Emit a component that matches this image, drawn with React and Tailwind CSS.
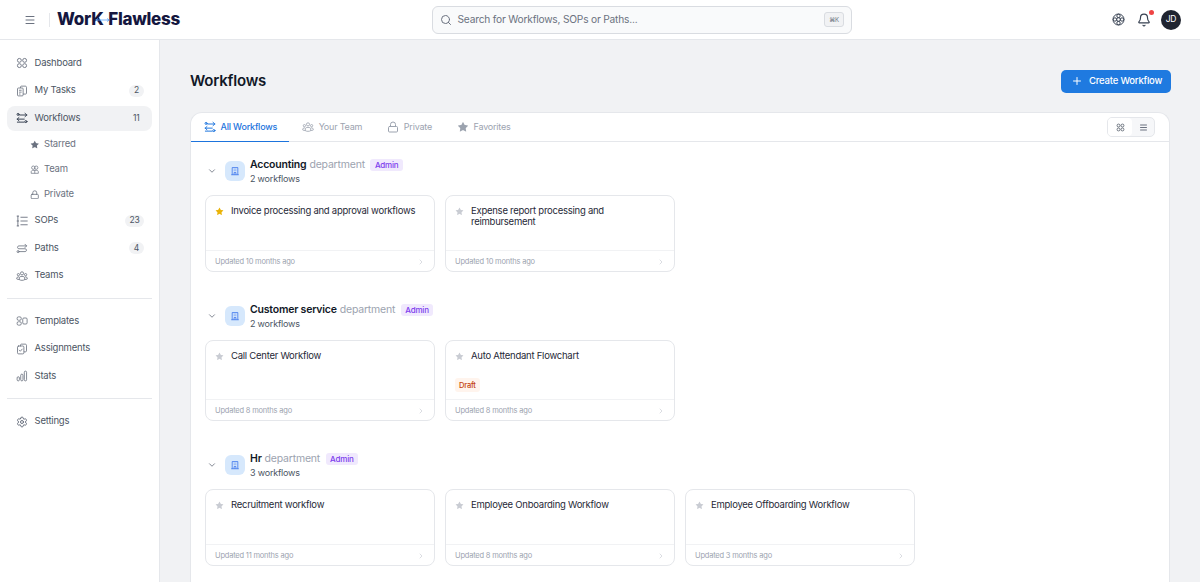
import { Bell, ChevronDown, ChevronRight, Lock, Menu, Plus, Search, Settings, Star } from 'lucide-react';

const font = { fontFamily: 'Inter, "Noto Sans", sans-serif' };

function GridIcon({ className }) {
  return (
    <svg viewBox="0 0 16 16" fill="none" stroke="currentColor" strokeWidth="1.2" className={className}>
      <circle cx="4.5" cy="4.5" r="2.6" />
      <circle cx="11.5" cy="4.5" r="2.6" />
      <circle cx="4.5" cy="11.5" r="2.6" />
      <circle cx="11.5" cy="11.5" r="2.6" />
    </svg>
  );
}

function ListIcon({ className }) {
  return (
    <svg viewBox="0 0 16 16" fill="none" stroke="currentColor" strokeWidth="1.800" className={className}>
      <path d="M2 3.500h12M2 8h12M2 12.500h12" />
    </svg>
  );
}

function TasksIcon({ className }) {
  return (
    <svg viewBox="0 0 16 16" fill="none" stroke="currentColor" strokeWidth="1.1" className={className}>
      <rect x="2" y="4" width="7.5" height="10.5" rx="1.2" />
      <path d="M6 4V2.6c0-.6.5-1.1 1.1-1.1h5.4c.8 0 1.5.7 1.5 1.5v8c0 .6-.5 1.1-1.1 1.1H9.500" />
      <path d="M4 7h3.500M4 9.500h3.500M4 12h2" />
    </svg>
  );
}

function FlowIcon({ className }) {
  return (
    <svg viewBox="0 0 16 16" fill="none" stroke="currentColor" strokeWidth="1.300" strokeLinecap="round" strokeLinejoin="round" className={className}>
      <path d="M5 4h9.500M12 1.800 14.500 4 12 6.200" />
      <circle cx="2.800" cy="3.200" r="1.400" />
      <path d="M11 9.500H1.500M4 7.300 1.500 9.500 4 11.700" />
      <path d="M1.800 13.500H11" />
      <circle cx="13.200" cy="12.800" r="1.400" />
    </svg>
  );
}

function UsersIcon({ className }) {
  return (
    <svg viewBox="0 0 16 16" fill="none" stroke="currentColor" strokeWidth="1.200" className={className}>
      <circle cx="5.500" cy="4.500" r="2.800" />
      <circle cx="10.500" cy="4.500" r="2.800" />
      <path d="M2 14v-2.500C2 10.100 3.200 9 4.600 9h6.800c1.400 0 2.600 1.100 2.600 2.500V14H2Z" />
      <path d="M8 9v5" />
    </svg>
  );
}

function SopIcon({ className }) {
  return (
    <svg viewBox="0 0 16 16" fill="none" stroke="currentColor" strokeWidth="1.200" strokeLinecap="round" className={className}>
      <path d="M2.500 1.500v13M1.500 1.500h2M1.500 14.500h2M1.500 8h2" />
      <path d="M6.500 3h8.500M6.500 8h8.500M6.500 13h8.500" />
    </svg>
  );
}

function PathIcon({ className }) {
  return (
    <svg viewBox="0 0 16 16" fill="none" stroke="currentColor" strokeWidth="1.100" strokeLinecap="round" strokeLinejoin="round" className={className}>
      <circle cx="2.800" cy="12.800" r="1.400" />
      <path d="M4.500 12.800h7.700c1 0 1.800-.8 1.800-1.900S13.200 9 12.200 9H3.800C2.800 9 2 8.200 2 7.100s.8-1.900 1.800-1.900H14" />
      <path d="M12 3l2.200 2.200L12 7.400" />
    </svg>
  );
}

function TeamsIcon({ className }) {
  return (
    <svg viewBox="0 0 16 16" fill="none" stroke="currentColor" strokeWidth="1.100" strokeLinejoin="round" className={className}>
      <circle cx="8" cy="4.500" r="2.100" />
      <circle cx="3.200" cy="6.200" r="1.500" />
      <circle cx="12.800" cy="6.200" r="1.500" />
      <path d="M4.500 13v-2.200C4.500 9.300 5.700 8.500 8 8.500s3.500.8 3.500 2.300V13c-2 1-5 1-7 0Z" />
      <path d="M4.300 9.200H2.900C1.800 9.200 1 10 1 11v1c.8.500 2 .7 3.400.6M11.700 9.200h1.400c1.100 0 1.900.8 1.900 1.800v1c-.8.500-2 .7-3.400.6" />
    </svg>
  );
}

function TemplateIcon({ className }) {
  return (
    <svg viewBox="0 0 16 16" fill="none" stroke="currentColor" strokeWidth="1.100" className={className}>
      <rect x="1.500" y="2.500" width="5.500" height="4.500" rx="1.800" />
      <rect x="1.500" y="9" width="5.500" height="4.500" rx="1.800" />
      <rect x="9" y="4" width="5.800" height="8" rx="1.500" />
    </svg>
  );
}

function AssignIcon({ className }) {
  return (
    <svg viewBox="0 0 16 16" fill="none" stroke="currentColor" strokeWidth="1.100" strokeLinecap="round" strokeLinejoin="round" className={className}>
      <rect x="2" y="4" width="8.500" height="10.500" rx="1.500" />
      <path d="M6 4V2.800c0-.7.5-1.300 1.200-1.300h5.300c.8 0 1.500.7 1.500 1.500v7.500c0 .7-.6 1.300-1.300 1.300h-1.700" />
      <path d="M4.300 9.500 5.800 11l2.400-2.800" />
    </svg>
  );
}

function StatsIcon({ className }) {
  return (
    <svg viewBox="0 0 16 16" fill="none" stroke="currentColor" strokeWidth="1.100" className={className}>
      <rect x="1.500" y="9" width="3" height="5.500" rx="1.500" />
      <rect x="6.300" y="5.500" width="3" height="9" rx="1.500" />
      <rect x="11.100" y="1.500" width="3" height="13" rx="1.500" />
    </svg>
  );
}

function HelpIcon({ className }) {
  return (
    <svg viewBox="0 0 16 16" fill="none" stroke="currentColor" strokeWidth="1.200" className={className}>
      <circle cx="8" cy="8" r="6.800" />
      <circle cx="8" cy="8" r="2.300" />
      <circle cx="8" cy="3.600" r="2.100" />
      <circle cx="8" cy="12.400" r="2.100" />
      <circle cx="3.600" cy="8" r="2.100" />
      <circle cx="12.400" cy="8" r="2.100" />
    </svg>
  );
}

function BuildingIcon({ className }) {
  return (
    <svg viewBox="0 0 16 16" fill="none" stroke="currentColor" strokeWidth="1.100" className={className}>
      <path d="M3.500 14V2.500h9V14" />
      <path d="M2 14h12" />
      <path d="M6 5h1.300M8.700 5H10M6 7.500h1.300M8.700 7.500H10" />
      <path d="M6.500 14v-3.500h3V14" />
    </svg>
  );
}

function NavItem({ icon: Icon, label, count, active, sub }) {
  return (
    <div
      className={`flex items-center rounded-lg text-[9.500px] text-[#4b5563] ${sub ? 'h-[25px] pl-[23px]' : 'mt-[2.500px] h-[25px] pl-[9px] pr-[8px]'} ${active ? 'bg-[#f1f2f4] text-[#1f2937]' : ''}`}
    >
      <Icon className={`shrink-0 ${sub ? 'h-[9.500px] w-[9.500px]' : 'h-[12px] w-[12px]'} ${active ? 'text-[#374151]' : 'text-[#6b7280]'}`} />
      <span className={sub ? 'ml-[4.500px] text-[#6b7280]' : 'ml-[6.500px]'}>{label}</span>
      {count && (
        <span className={`ml-auto flex h-[12px] min-w-[15px] items-center justify-center rounded-full px-[4.500px] text-[8.500px] text-[#4b5563] ${active ? '' : 'bg-[#f1f2f4]'}`}>
          {count}
        </span>
      )}
    </div>
  );
}

const FilledStar = (props) => <Star fill="currentColor" strokeWidth={0} {...props} />;

function Sidebar() {
  return (
    <aside className="flex h-full w-[160px] shrink-0 flex-col border-r border-[#e5e7eb] bg-white px-[7px] pt-[8px]">
      <NavItem icon={GridIcon} label="Dashboard" />
      <NavItem icon={TasksIcon} label="My Tasks" count="2" />
      <NavItem icon={FlowIcon} label="Workflows" count="11" active />
      <div className="mt-[1.500px] -mb-[1.500px]">
        <NavItem icon={FilledStar} label="Starred" sub />
        <NavItem icon={UsersIcon} label="Team" sub />
        <NavItem icon={Lock} label="Private" sub />
      </div>
      <NavItem icon={SopIcon} label="SOPs" count="23" />
      <NavItem icon={PathIcon} label="Paths" count="4" />
      <NavItem icon={TeamsIcon} label="Teams" />
      <div className="mt-[9.500px] mb-[7.500px] border-t border-[#e5e7eb]" />
      <NavItem icon={TemplateIcon} label="Templates" />
      <NavItem icon={AssignIcon} label="Assignments" />
      <NavItem icon={StatsIcon} label="Stats" />
      <div className="mt-[9.500px] mb-[7.500px] border-t border-[#e5e7eb]" />
      <NavItem icon={Settings} label="Settings" />
    </aside>
  );
}

function Header() {
  return (
    <header className="flex h-[40px] shrink-0 items-center border-b border-[#e5e7eb] bg-white pr-[19px]">
      <Menu className="ml-[24px] h-[12px] w-[12px] text-[#6b7280]" />
      <div className="ml-[13px] h-[14px] border-l border-[#e5e7eb]" />
      <div className="relative ml-[7px] w-[124px] text-[17px] leading-none font-extrabold tracking-[-0.3px] [word-spacing:1.500px] whitespace-nowrap text-[#15173f]">
        WorK Flawless
        <svg viewBox="0 0 20 6" fill="none" stroke="#60a5fa" strokeWidth="1.100" className="absolute top-[5.500px] left-[38px] h-[6px] w-[15px]">
          <path d="M1 3h18M4 1 1 3l3 2M16 1l3 2-3 2" />
        </svg>
      </div>
      <div className="ml-[251px] flex h-[28px] w-[420px] items-center rounded-md border border-[#d9dce1] bg-[#f9fafb] pl-[7px] pr-[7px]">
        <Search className="h-[12px] w-[12px] text-[#6b7280]" />
        <span className="ml-[5.500px] text-[10.200px] text-[#6b7280]">Search for Workflows, SOPs or Paths...</span>
        <span className="ml-auto flex h-[15px] w-[20px] items-center justify-center rounded-[3px] border border-[#d9dce1] bg-[#f1f2f4] text-[6px] text-[#6b7280]">⌘K</span>
      </div>
      <HelpIcon className="ml-auto h-[13px] w-[13px] text-[#374151]" />
      <div className="relative ml-[12px]">
        <Bell className="h-[14px] w-[14px] text-[#374151]" />
        <span className="absolute -top-[2.500px] -right-[2.500px] h-[5px] w-[5px] rounded-full bg-[#ef4444]" />
      </div>
      <div className="ml-[10px] flex h-[20px] w-[20px] items-center justify-center rounded-full bg-[#1f2430] text-[8.500px] text-white">JD</div>
    </header>
  );
}

const sections = [
  {
    name: 'Accounting',
    count: '2 workflows',
    cardHeight: 'h-[77px]',
    cards: [
      { title: 'Invoice processing and approval workflows', updated: 'Updated 10 months ago', starred: true },
      { title: 'Expense report processing and reimbursement', updated: 'Updated 10 months ago' },
    ],
  },
  {
    name: 'Customer service',
    count: '2 workflows',
    cardHeight: 'h-[81px]',
    cards: [
      { title: 'Call Center Workflow', updated: 'Updated 8 months ago' },
      { title: 'Auto Attendant Flowchart', updated: 'Updated 8 months ago', draft: true },
    ],
  },
  {
    name: 'Hr',
    count: '3 workflows',
    cardHeight: 'h-[77px]',
    cards: [
      { title: 'Recruitment workflow', updated: 'Updated 11 months ago' },
      { title: 'Employee Onboarding Workflow', updated: 'Updated 8 months ago' },
      { title: 'Employee Offboarding Workflow', updated: 'Updated 3 months ago' },
    ],
  },
];

function WorkflowCard({ card, height }) {
  return (
    <div className={`flex w-[230px] flex-col rounded-lg border border-[#e5e7eb] bg-white ${height}`}>
      <div className="flex flex-1 flex-col px-[9px] pt-[9px]">
        <div className="flex items-start">
          <Star fill="currentColor" strokeWidth={0} className={`mt-[2px] h-[9px] w-[9px] shrink-0 ${card.starred ? 'text-[#eab308]' : 'text-[#c9ccd3]'}`} />
          <span className="ml-[7px] text-[9.500px] leading-[11px] tracking-[-0.25px] text-[#1f2937]">{card.title}</span>
        </div>
        {card.draft && (
          <span className="mt-[17px] w-fit rounded-[3px] bg-[#fff4ed] px-[4px] py-[1.500px] text-[7.500px] font-medium text-[#c2410c]">Draft</span>
        )}
      </div>
      <div className="flex h-[21px] items-center justify-between border-t border-[#f1f2f4] px-[9px] pt-[1px] text-[7.500px] text-[#9ca3af]">
        {card.updated}
        <ChevronRight className="h-[8px] w-[8px] text-[#c9ccd3]" />
      </div>
    </div>
  );
}

function Section({ section }) {
  return (
    <section>
      <div className="flex h-[28px] items-center">
        <ChevronDown className="ml-[16px] h-[10px] w-[10px] text-[#6b7280]" />
        <div className="ml-[8px] flex h-[20px] w-[20px] items-center justify-center rounded-md bg-[#d6e8fc]">
          <BuildingIcon className="h-[10px] w-[10px] text-[#2563eb]" />
        </div>
        <div className="ml-[5px] pt-[2px]">
          <div className="flex items-center text-[10.500px] leading-[14px]">
            <span className="font-semibold text-[#111827]">{section.name}</span>
            <span className="ml-[3px] text-[#9ca3af]">department</span>
            <span className="ml-[5.500px] rounded-[3px] bg-[#f0e9fd] px-[4.500px] text-[8px] leading-[12px] font-medium text-[#7c3aed]">Admin</span>
          </div>
          <div className="text-[9px] leading-[14px] text-[#4b5563]">{section.count}</div>
        </div>
      </div>
      <div className="mt-[10px] flex gap-[10px] pl-[14px]">
        {section.cards.map((card) => (
          <WorkflowCard key={card.title} card={card} height={section.cardHeight} />
        ))}
      </div>
    </section>
  );
}

const tabs = [
  { label: 'All Workflows', icon: FlowIcon, active: true },
  { label: 'Your Team', icon: TeamsIcon },
  { label: 'Private', icon: Lock },
  { label: 'Favorites', icon: FilledStar },
];

function Panel() {
  return (
    <div className="mt-[19px] flex-1 rounded-t-xl border border-b-0 border-[#e5e7eb] bg-white">
      <div className="flex h-[29px] items-stretch border-b border-[#e5e7eb] pr-[14px]">
        {tabs.map((tab) => (
          <div
            key={tab.label}
            className={`flex items-center pr-[12px] pl-[12.500px] text-[9px] ${tab.active ? '-mb-px border-b border-[#1d74dd] font-medium text-[#1d74dd]' : 'text-[#9ca3af]'}`}
          >
            <tab.icon className={`h-[12px] w-[12px] ${tab.active ? 'text-[#1d74dd]' : 'text-[#9ca3af]'}`} />
            <span className="ml-[5px]">{tab.label}</span>
          </div>
        ))}
        <div className="ml-auto flex items-center">
          <div className="flex h-[20px] w-[48px] rounded-[5px] border border-[#e5e7eb] bg-[#f6f7f9]">
            <div className="flex w-[24px] items-center justify-center rounded-[4px] bg-white">
              <GridIcon className="h-[9px] w-[9px] text-[#374151]" />
            </div>
            <div className="flex flex-1 items-center justify-center">
              <ListIcon className="h-[9px] w-[9px] text-[#6b7280]" />
            </div>
          </div>
        </div>
      </div>
      <div className="flex flex-col gap-[30px] pt-[15px]">
        {sections.map((section) => (
          <Section key={section.name} section={section} />
        ))}
      </div>
    </div>
  );
}

export default function App() {
  return (
    <div className="flex h-[582px] w-[1200px] flex-col overflow-hidden bg-white tracking-[-0.2px]" style={font}>
      <Header />
      <div className="flex min-h-0 flex-1">
        <Sidebar />
        <main className="flex min-w-0 flex-1 flex-col bg-[#f1f2f4] pt-[29px] pr-[30px] pl-[30px]">
          <div className="flex h-[24px] items-center justify-between">
            <h1 className="pt-[1px] text-[15px] font-semibold text-[#111827]">Workflows</h1>
            <button className="-mr-px flex h-[23px] w-[110px] items-center rounded-[5px] bg-[#1f7ae0] pl-[10px] text-[9.500px] font-medium text-white">
              <Plus className="mr-[6px] h-[12px] w-[12px]" />
              Create Workflow
            </button>
          </div>
          <Panel />
        </main>
      </div>
    </div>
  );
}
